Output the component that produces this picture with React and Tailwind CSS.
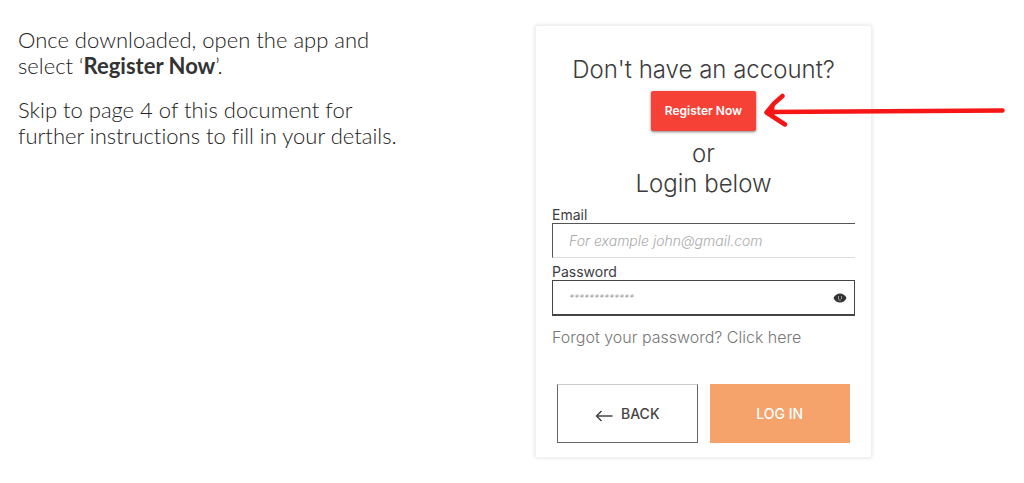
import React from "react";

const Arrow = () => {
  return (
    <svg
      className="absolute left-full top-0 ml-2 w-[242px] h-[40px] pointer-events-none"
      viewBox="0 0 242 40"
      fill="none"
      stroke="#f61616"
      strokeLinecap="round"
      strokeLinejoin="round"
      aria-hidden="true"
    >
      <path d="M4 21L238.500 19.500" strokeWidth="4.500" />
      <path d="M18.500 5L10 12.500L2.500 21.500L21 33.500" strokeWidth="4.500" />
      <path d="M2 21.500L10 14V26Z" fill="#f61616" strokeWidth="1" />
    </svg>
  );
};

const EyeIcon = () => {
  return (
    <svg className="w-[14px] h-[10px]" viewBox="0 0 14 10" aria-hidden="true">
      <path d="M0.500 5C3 -1 11 -1 13.500 5C11 11 3 11 0.500 5Z" fill="#333" />
      <path d="M5.500 3V6.500M8.500 3V6M5.500 7H8" stroke="#999" strokeWidth="1" fill="none" />
    </svg>
  );
};

const LoginCard = () => {
  return (
    <div className="w-[337px] shrink-0 border border-[#f0f0f0] shadow-[0_0_4px_rgba(0,0,0,0.12)] rounded-xs px-4 pt-7 pb-[14px] font-['Inter',sans-serif] text-[#3c3c3c]">
      <div className="flex flex-col items-center text-center">
        <h1 className="text-2xl font-light">Don't have an account?</h1>
        <div className="relative mt-[5px]">
          <button
            type="button"
            className="block w-[105px] h-10 rounded-xs bg-[#f64236] text-white text-xs font-semibold shadow-[0_1px_3px_rgba(0,0,0,0.5)] whitespace-nowrap"
          >
            Register Now
          </button>
          <Arrow />
        </div>
        <p className="mt-2 text-2xl/[30px] font-light">or</p>
        <p className="text-2xl/[30px] font-light">Login below</p>
      </div>
      <form className="mt-2" onSubmit={(e) => e.preventDefault()}>
        <label htmlFor="email" className="block text-sm/4">
          Email
        </label>
        <input
          id="email"
          type="email"
          placeholder="For example john@gmail.com"
          className="block w-full h-[35px] border-t border-l border-b border-t-[#555] border-l-[#555] border-b-[#ddd] px-4 text-sm outline-none placeholder:italic placeholder:font-light placeholder:text-[#aaa]"
        />
        <label htmlFor="password" className="block mt-1.5 text-sm/4">
          Password
        </label>
        <div className="flex items-center h-9 border border-[#444] border-b-2">
          <input
            id="password"
            type="password"
            placeholder="*************"
            className="flex-1 min-w-0 h-full px-4 text-[10px] outline-none placeholder:italic placeholder:font-light placeholder:text-[#999]"
          />
          <button type="button" aria-label="Show password" className="px-[7px]">
            <EyeIcon />
          </button>
        </div>
        <a href="#" className="block mt-[11px] text-base/5 font-light text-[#777]">
          Forgot your password? Click here
        </a>
        <div className="mt-[37px] px-[5px] grid grid-cols-2 gap-3">
          <button
            type="button"
            className="h-[59px] flex items-center justify-center gap-2 border border-[#666] border-t-[#ccc] text-sm font-medium text-[#444]"
          >
            <svg
              className="w-[18px] h-3 mt-1"
              viewBox="0 0 18 12"
              fill="none"
              stroke="currentColor"
              strokeWidth="1.500"
              aria-hidden="true"
            >
              <path d="M17.500 6H1.500M6.500 1L1.500 6L6.500 11" />
            </svg>
            BACK
          </button>
          <button type="submit" className="h-[59px] bg-[#f5a26b] text-white text-sm font-medium">
            LOG IN
          </button>
        </div>
      </form>
    </div>
  );
};

const App = () => {
  return (
    <div className="flex justify-between pt-[25px] pl-[18px] pr-[152px] pb-6 bg-white">
      <div className="w-[400px] pt-0.5 space-y-[18px] font-['Lato',sans-serif] font-light text-[22px]/[26px] text-[#222] [font-variant-ligatures:none]">
        <p>
          Once downloaded, open the app and
          <br />
          select ‘<strong className="font-bold text-[#333]">Register Now</strong>’.
        </p>
        <p>
          Skip to page 4 of this document for
          <br />
          further instructions to fill in your details.
        </p>
      </div>
      <LoginCard />
    </div>
  );
};

export default App;
